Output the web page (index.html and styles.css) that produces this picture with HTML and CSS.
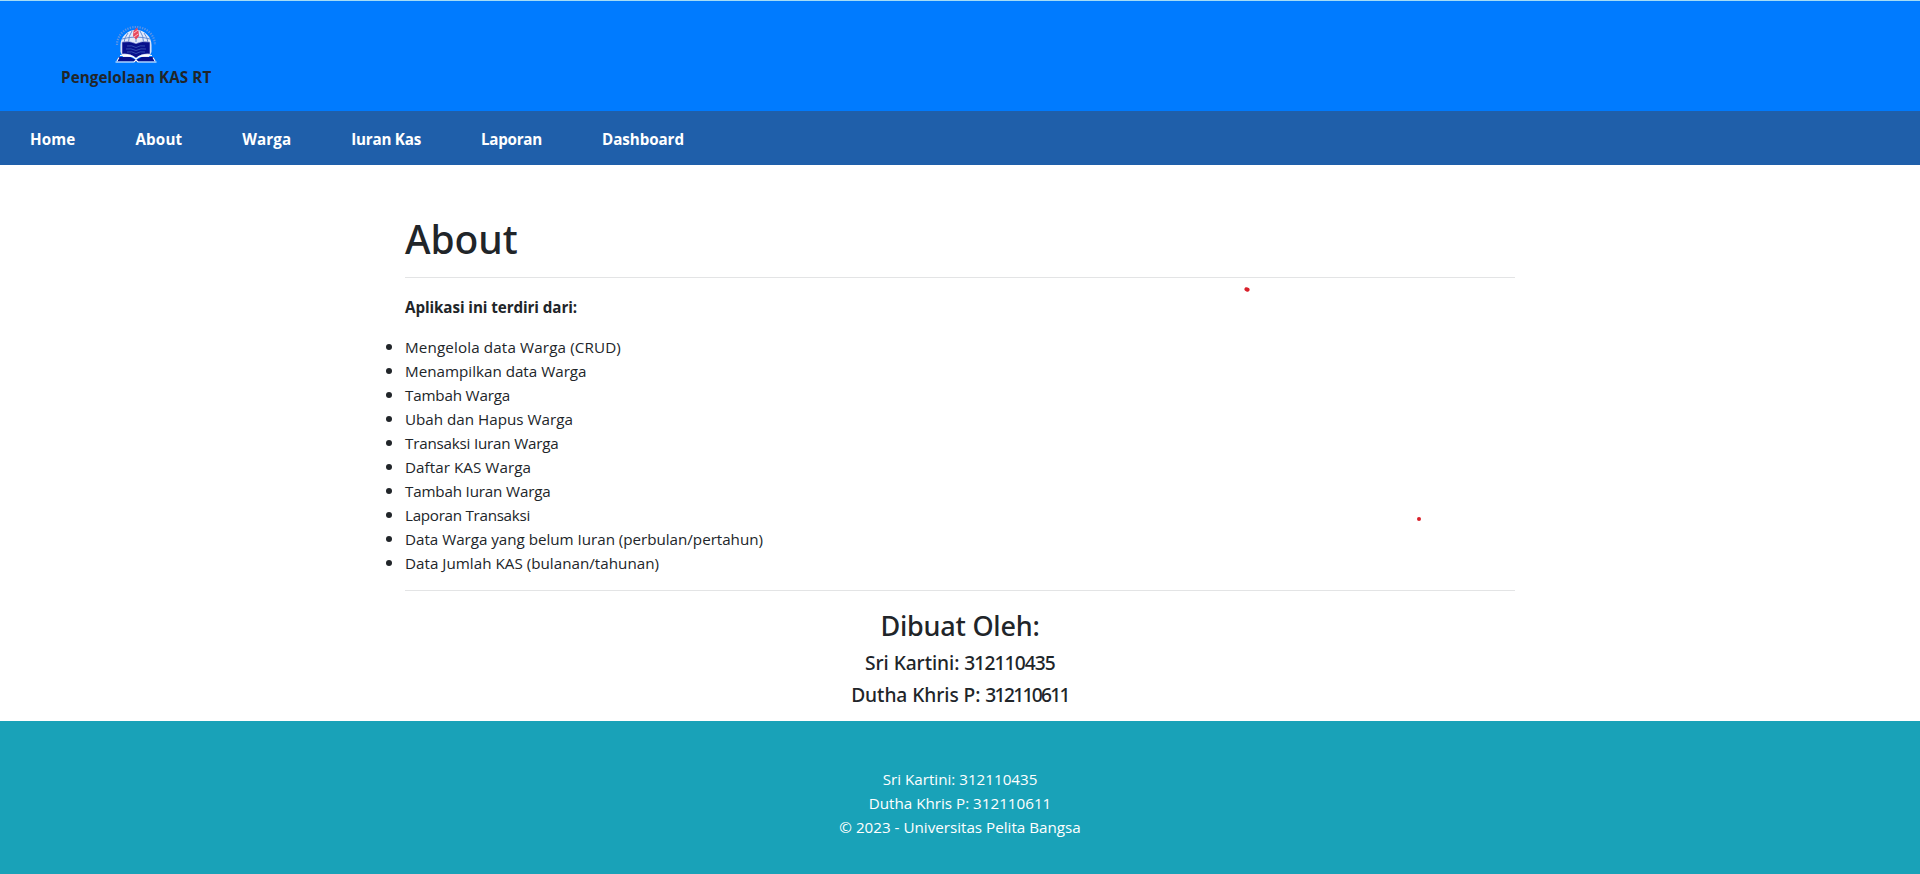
FILE: index.html
```html
<!DOCTYPE html>
<html lang="id">
<head>
<meta charset="utf-8">
<title>About</title>
<link rel="stylesheet" href="styles.css">
</head>
<body>
<header class="header">
  <div class="brand">
    <svg class="logo" viewBox="0 0 44 38" aria-hidden="true">
      <path d="M3 20A19 18 0 0 1 41 20" fill="none" stroke="#5b93e6" stroke-width="2.200" stroke-dasharray="1.300 1.200"/>
      <path d="M6.500 27V20A15.500 15 0 0 1 37.500 20V27L35 32H9Z" fill="#e4eafa"/>
      <path d="M14 8Q10 13 10 18M18 6Q14.500 11 14.500 17M26 6Q29.500 11 29.500 17M30 8Q34 13 34 18M22 12V17M8 14Q22 10 36 14" fill="none" stroke="#5a84d0" stroke-width=".9"/>
      <path d="M23 2.500L24.500 6L25 11L22 14.500L19 11L19.500 6Z" fill="#e8475c"/>
      <path d="M20 8L24 5M20 12L24 9" stroke="#ffd9dd" stroke-width=".8"/>
      <path d="M8 17Q16 15.500 22 18.500Q28 15.500 36 17V29Q28 28 22 33Q16 28 8 29Z" fill="#07108c" stroke="#b9c6ee" stroke-width=".6"/>
      <path d="M13 21Q18 20 22 22.500Q26 20 31 21M12 24Q17 23 22 25.500Q27 23 32 24M13 27Q18 26 22 28.500Q26 26 31 27" fill="none" stroke="#3e5cb8" stroke-width=".8"/>
      <path d="M4.500 32H16L22 35L28 32H39.500L41 36.500H3Z" fill="#07108c"/>
      <path d="M6 30.500Q16 29 22 34Q28 29 38 30.500M5 32.500L3 36M39 32.500L41 36M1.500 37H20L22 35L24 37H42.500" fill="none" stroke="#fff" stroke-width="1.100"/>
    </svg>
    <span class="brand-name">Pengelolaan KAS RT</span>
  </div>
</header>
<nav class="nav">
  <a class="link home">Home</a>
  <a class="link about">About</a>
  <a class="link warga">Warga</a>
  <a class="link iuran">Iuran Kas</a>
  <a class="link laporan">Laporan</a>
  <a class="link dashboard">Dashboard</a>
</nav>
<main class="container">
  <h1 class="title">About</h1>
  <hr class="rule">
  <p class="intro">Aplikasi ini terdiri dari:</p>
  <ul class="features">
    <li class="f1">Mengelola data Warga (CRUD)</li>
    <li>Menampilkan data Warga</li>
    <li class="f3">Tambah Warga</li>
    <li>Ubah dan Hapus Warga</li>
    <li class="f5">Transaksi Iuran Warga</li>
    <li class="f6">Daftar KAS Warga</li>
    <li class="f7">Tambah Iuran Warga</li>
    <li class="f8">Laporan Transaksi</li>
    <li class="f9">Data Warga yang belum Iuran (perbulan/pertahun)</li>
    <li class="f10">Data Jumlah KAS (bulanan/tahunan)</li>
  </ul>
  <hr class="rule last">
  <section class="authors">
    <h3 class="authors-title">Dibuat Oleh:</h3>
    <h5 class="author">Sri Kartini: <span class="num">312110435</span></h5>
    <h5 class="author">Dutha Khris P: <span class="num tight">312110611</span></h5>
  </section>
  <svg class="mark mark-a" viewBox="0 0 6 5"><ellipse cx="3" cy="2.500" rx="2.700" ry="2" transform="rotate(18 3 2.500)"/></svg>
  <svg class="mark mark-b" viewBox="0 0 4 4"><circle cx="2" cy="2" r="2"/></svg>
</main>
<footer class="footer">
  <div>Sri Kartini: 312110435</div>
  <div>Dutha Khris P: 312110611</div>
  <div>© 2023 - Universitas Pelita Bangsa</div>
</footer>
</body>
</html>
```
FILE: styles.css
```css
* { box-sizing: border-box; }
body {
  margin: 0;
  min-height: 874px;
  display: flex;
  flex-direction: column;
  background: #fff;
  color: #212529;
  font: 400 15.2px/24px "Open Sans", "Noto Sans", sans-serif;
  overflow: hidden;
}
.header {
  height: 111px;
  border-top: 1px solid #a5dcf5;
  background: #007bff;
  padding: 24px 61px 0;
  display: flex;
}
.brand { display: flex; flex-direction: column; align-items: center; height: 64px; }
.logo { width: 44px; height: 38px; margin-bottom: 2px; }
.brand-name { font-weight: 700; letter-spacing: .09px; white-space: nowrap; }
.nav { height: 54px; padding-top: 2px; background: #1f5faa; display: flex; align-items: center; }
.link { padding: 0 30px; color: #fff; font-weight: 700; white-space: nowrap; }
.home { letter-spacing: .12px; }
.about { letter-spacing: .164px; }
.warga { letter-spacing: .097px; }
.iuran { letter-spacing: -.236px; }
.laporan { letter-spacing: -.261px; }
.dashboard { letter-spacing: -.073px; }
.container { position: relative; width: 1140px; margin: 0 auto; padding: 50px 15px 0; height: 556px; }
.title { margin: 0 0 8px; font: 500 39px/47px "Noto Sans", sans-serif; letter-spacing: -.091px; }
.rule { margin: 15px 0 16px; border: 0; border-top: 1px solid #e3e4e5; }
.intro { margin: 17px 0 15px; font-weight: 700; letter-spacing: -.081px; }
.features { margin: 0 0 16px; padding: 0; }
.features li { height: 24px; }
.features li::marker { font-size: 18px; }
.last { margin: 16px 0 18px; }
.f1 { letter-spacing: .137px; }
.f3 { letter-spacing: -.185px; }
.f5 { letter-spacing: -.206px; }
.f6 { letter-spacing: .056px; }
.f7 { letter-spacing: -.176px; }
.f8 { letter-spacing: -.28px; }
.f9 { letter-spacing: -.025px; }
.f10 { letter-spacing: .017px; }
.authors { text-align: center; }
.authors-title { margin: 0 0 8px; font: 500 27px/34px "Noto Sans", sans-serif; letter-spacing: -.228px; }
.author { margin: 0 0 8px; font: 500 19.2px/24px "Noto Sans", sans-serif; letter-spacing: -.06px; }
.num { letter-spacing: -.9px; }
.tight { letter-spacing: -1.7px; }
.mark { position: absolute; fill: #d9202a; }
.mark-a { left: 854px; top: 122px; width: 6px; height: 5px; }
.mark-b { left: 1027px; top: 352px; width: 4px; height: 4px; }
.footer { flex: 1; padding-top: 46px; background: #19a2b8; color: #fff; text-align: center; }
```
